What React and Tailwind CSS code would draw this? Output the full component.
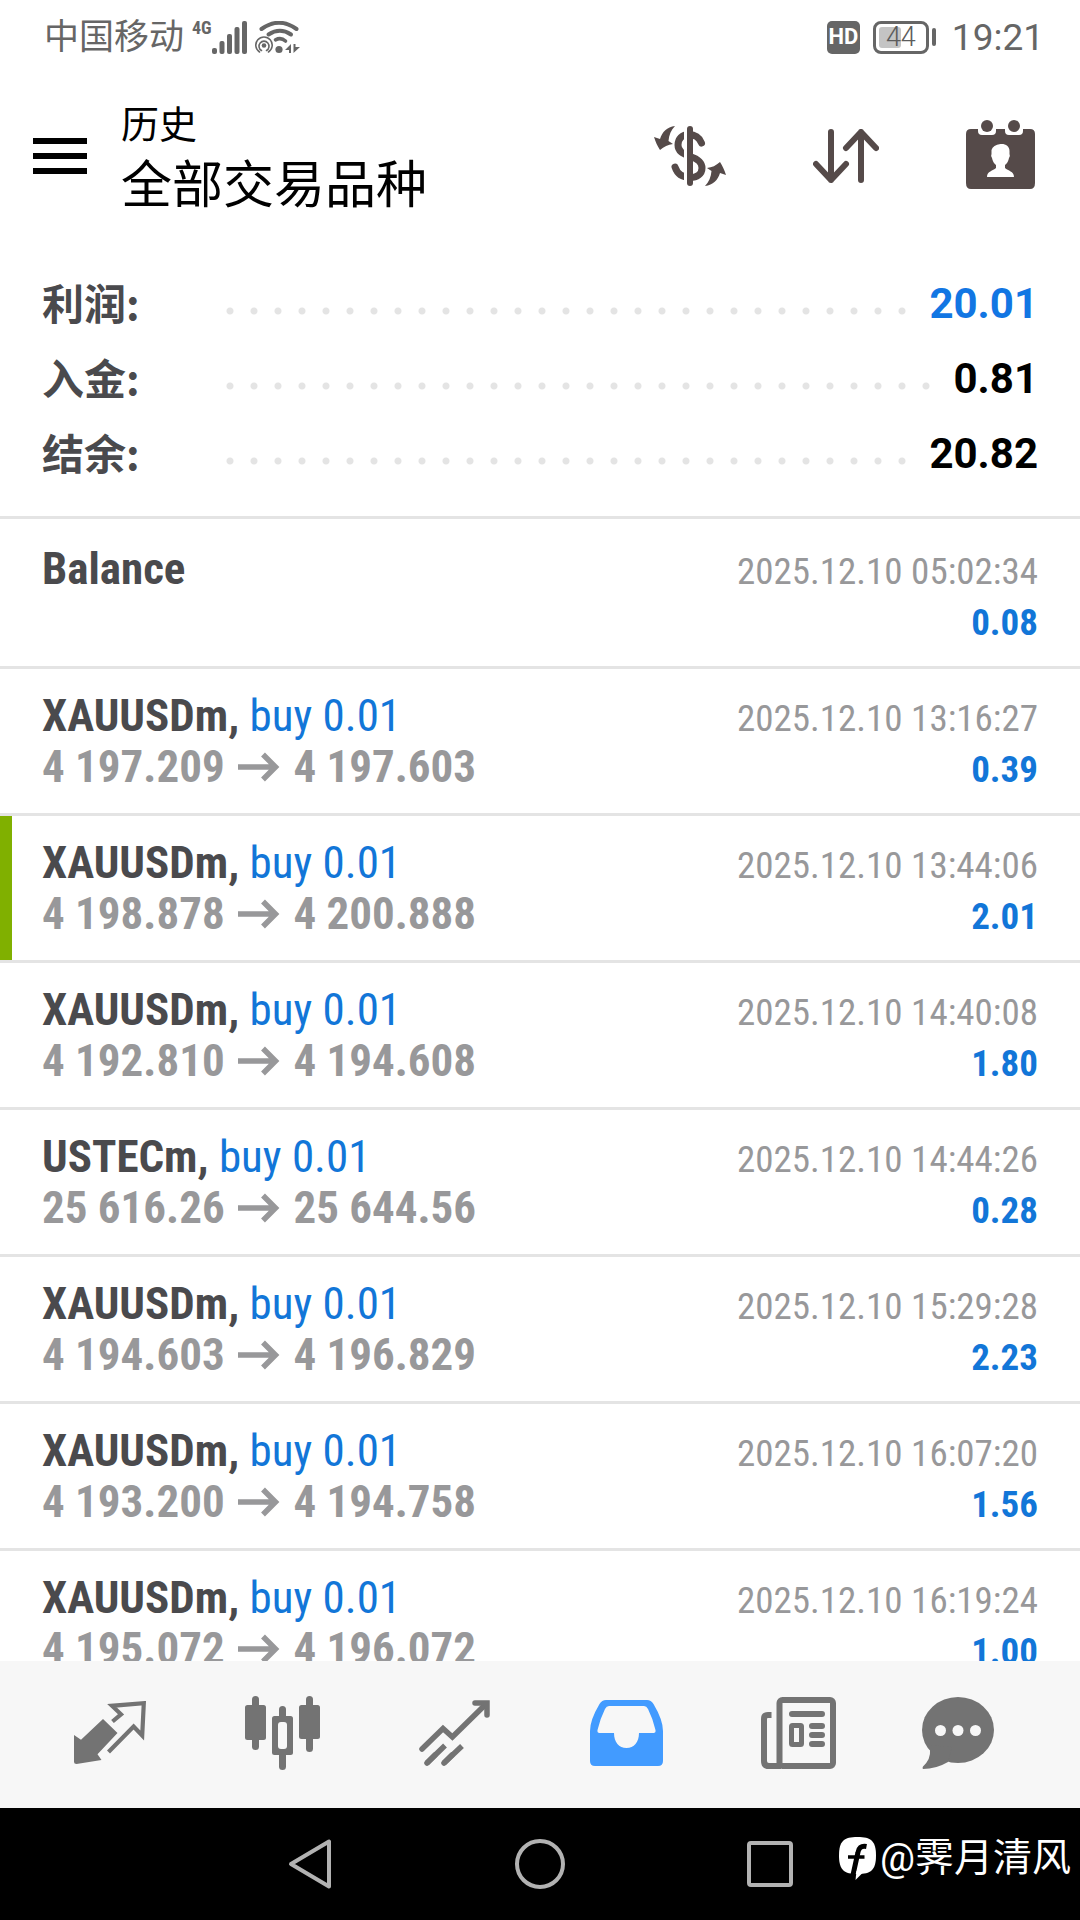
const CJK = 'font-["Roboto","Noto_Sans_CJK_SC",sans-serif]';
const CONDENSED = 'font-["Roboto_Condensed","Liberation_Sans_Narrow","Roboto",sans-serif]';

const totals = [
  { label: "利润:", value: "20.01", color: "text-[#1276e3]" },
  { label: "入金:", value: "0.81", color: "text-black" },
  { label: "结余:", value: "20.82", color: "text-black" },
];

const deals = [
  { symbol: "XAUUSDm", open: "4 197.209", close: "4 197.603", time: "2025.12.10 13:16:27", profit: "0.39" },
  { symbol: "XAUUSDm", open: "4 198.878", close: "4 200.888", time: "2025.12.10 13:44:06", profit: "2.01", marked: true },
  { symbol: "XAUUSDm", open: "4 192.810", close: "4 194.608", time: "2025.12.10 14:40:08", profit: "1.80" },
  { symbol: "USTECm", open: "25 616.26", close: "25 644.56", time: "2025.12.10 14:44:26", profit: "0.28" },
  { symbol: "XAUUSDm", open: "4 194.603", close: "4 196.829", time: "2025.12.10 15:29:28", profit: "2.23" },
  { symbol: "XAUUSDm", open: "4 193.200", close: "4 194.758", time: "2025.12.10 16:07:20", profit: "1.56" },
  { symbol: "XAUUSDm", open: "4 195.072", close: "4 196.072", time: "2025.12.10 16:19:24", profit: "1.00" },
];

function SignalIcon() {
  return (
    <svg width="35" height="33" viewBox="0 0 35 33" fill="currentColor" aria-hidden="true">
      <rect x="0" y="27" width="5" height="6" rx="2" />
      <rect x="7.5" y="20" width="5" height="13" rx="2" />
      <rect x="15" y="13" width="5" height="20" rx="2" />
      <rect x="22.5" y="6" width="5" height="27" rx="2" />
      <rect x="30" y="0" width="5" height="33" rx="2" />
    </svg>
  );
}

function WifiIcon() {
  return (
    <svg width="45" height="33" viewBox="0 0 45 33" fill="none" stroke="currentColor" strokeLinecap="round" aria-hidden="true">
      <path d="M6.5 8 Q24 -4.5 41.5 8" strokeWidth="4" />
      <path d="M13.5 13.5 Q25 6 36 13.5" strokeWidth="4" />
      <path d="M20.5 18.8 Q26 16 30.5 20" strokeWidth="3.6" />
      <circle cx="24" cy="28.500" r="3.6" fill="currentColor" stroke="none" />
      <circle cx="9" cy="24.5" r="2.3" fill="currentColor" stroke="none" />
      <path d="M6.5 29.5 A5 5 0 1 1 11.5 29.5" strokeWidth="1.6" />
      <path d="M4.5 31 A8.2 8.2 0 1 1 13.5 31" strokeWidth="1.6" />
      <path d="M30 29 L36 23 V32 H34 V29 Z M38.5 23 H40.5 V26 H45 L38.5 32 Z" fill="currentColor" stroke="none" />
    </svg>
  );
}

function BatteryIcon() {
  return (
    <span className="flex items-center gap-[3px]">
      <span className="relative flex h-[33px] w-14 items-center justify-center rounded-lg border-[3px] border-[#666]">
        <span className="absolute left-[3px] top-[3px] h-[21px] w-[22px] rounded-[3px] bg-[#c4c4c4]" />
        <span className="relative text-[27px] font-light leading-none text-[#5c5c5c]">44</span>
      </span>
      <span className="h-[18px] w-1 rounded-[2px] bg-[#666]" />
    </span>
  );
}

function StatusBar() {
  return (
    <div className={`flex h-[74px] items-center justify-between pl-[44px] pr-9 text-[#666] ${CJK}`}>
      <div className="flex items-center">
        <span className="text-[35px] leading-none">中国移动</span>
        <span className={`ml-2 self-start text-lg font-bold leading-4 ${CONDENSED}`}>4G</span>
        <SignalIcon />
        <span className="ml-2"><WifiIcon /></span>
      </div>
      <div className="flex items-center">
        <span className="flex h-[33px] w-[33px] items-center justify-center rounded-[5px] bg-[#666] text-[22px] font-bold leading-none text-white">HD</span>
        <span className="ml-[13px]"><BatteryIcon /></span>
        <span className="ml-4 text-[37px] leading-none">19:21</span>
      </div>
    </div>
  );
}

function CurrencyIcon() {
  return (
    <svg width="72" height="60" viewBox="0 0 72 60" fill="none" aria-hidden="true">
      <path d="M47.5 17 C45 11 40 8.5 35 8.5 C28 8.5 24 13 24 19 C24 26 30 28 36 30.5 C44 33 48 36 48 42 C48 48 43 51.5 36 51.5 C28 51.5 23 47 21 41" stroke="currentColor" strokeWidth="7" strokeLinecap="round" />
      <path d="M31.5 2 V58" stroke="#fff" strokeWidth="3" />
      <path d="M36 3 V57" stroke="currentColor" strokeWidth="6" strokeLinecap="round" />
      <path d="M21 0 C13 1 8 6 6 13 L0 11 C1.5 16 3.500 20 6 24 C10 20.5 14 18.5 19 18 L14.5 15 C15 9 17 4 21 0 Z" fill="currentColor" />
      <path d="M21 0 C13 1 8 6 6 13 L0 11 C1.5 16 3.500 20 6 24 C10 20.5 14 18.5 19 18 L14.5 15 C15 9 17 4 21 0 Z" fill="currentColor" transform="rotate(180 36 30)" />
    </svg>
  );
}

function SortIcon() {
  return (
    <svg width="66" height="54" viewBox="0 0 66 54" fill="none" stroke="currentColor" strokeWidth="6" strokeLinecap="round" strokeLinejoin="round" aria-hidden="true">
      <path d="M18 3 V51 M3 35 L18 51 L33 35" />
      <path d="M48 51 V3 M33 19 L48 3 L63 19" />
    </svg>
  );
}

function CalendarIcon() {
  return (
    <svg width="69" height="69" viewBox="0 0 69 69" aria-hidden="true">
      <path fill="currentColor" d="M5 9 H12 V11 Q12 15 16 15 H26 Q30 15 30 11 V9 H39 V11 Q39 15 43 15 H53 Q57 15 57 11 V9 H64 Q69 9 69 14 V63 Q69 69 64 69 H5 Q0 69 0 63 V14 Q0 9 5 9 Z" />
      <circle cx="21" cy="6" r="6" fill="currentColor" />
      <circle cx="48" cy="6" r="6" fill="currentColor" />
      <path fill="#fff" d="M34.5 24 C39 23.5 43.5 25.5 43.5 31 V34 Q44.5 36 43 38 Q42 43 39 45 V48 C42 51 48 51 48 57 H21 C21 51 27 51 30 48 V45 Q27 43 26 38 Q24.5 36 25.5 34 V30 Q27 25 34.5 24 Z" />
    </svg>
  );
}

function Header() {
  return (
    <header className={`flex h-[164px] items-center justify-between pl-[33px] pr-[45px] ${CJK}`}>
      <div className="flex items-center gap-[34px]">
        <button type="button" aria-label="菜单" className="flex w-[54px] flex-col gap-[9px]">
          <span className="h-1.5 w-full bg-black" />
          <span className="h-1.5 w-full bg-black" />
          <span className="h-1.5 w-full bg-black" />
        </button>
        <h1 className="pt-2 text-black">
          <span className="block text-[38px] leading-[52px]">历史</span>
          <span className="block text-[51px] leading-[70px]">全部交易品种</span>
        </h1>
      </div>
      <div className="flex items-center gap-[87px] text-[#554a49]">
        <button type="button" aria-label="货币"><CurrencyIcon /></button>
        <button type="button" aria-label="排序"><SortIcon /></button>
        <button type="button" aria-label="日期" className="pb-1"><CalendarIcon /></button>
      </div>
    </header>
  );
}

function Summary() {
  return (
    <dl className={`border-b-[3px] border-[#e4e4e4] px-[42px] pb-[25px] pt-7 text-[42px] font-bold ${CJK}`}>
      {totals.map((row) => (
        <div key={row.label} className="flex h-[75px] items-center">
          <dt className='w-[176px] shrink-0 self-start font-["Noto_Sans_CJK_SC",sans-serif] leading-[71px] text-[#4a4a4d]'>{row.label}</dt>
          <span className="mr-2 mt-[15px] h-2 flex-1 bg-[radial-gradient(circle,#e4e4e4_3px,transparent_4px)] bg-[length:24px_8px] bg-repeat-x" />
          <dd className={`leading-[75px] ${row.color}`}>{row.value}</dd>
        </div>
      ))}
    </dl>
  );
}

function Line({ left, right }) {
  return (
    <div className="flex h-[51px] items-baseline justify-between">
      <div className="text-[45px] leading-[51px]">{left}</div>
      <div className="text-[37px] leading-[45px]">{right}</div>
    </div>
  );
}

function PriceArrow() {
  return (
    <svg className="mx-[3px] inline align-baseline" width="42" height="30" viewBox="0 0 42 30" fill="none" stroke="currentColor" strokeWidth="5.5" role="img" aria-label="→">
      <path d="M0 15 H38 M25 2.5 L37.5 15 L25 27.5" />
    </svg>
  );
}

function DealList() {
  return (
    <ul className={`min-h-0 flex-1 overflow-hidden ${CONDENSED}`}>
      <li className="border-b-[3px] border-[#e4e4e4] px-[42px] pb-[21px] pt-6">
        <Line
          left={<span className="font-bold text-[#4a4a4d]">Balance</span>}
          right={<time className="text-[#98989a]">2025.12.10 05:02:34</time>}
        />
        <Line left={<span>&nbsp;</span>} right={<span className="font-bold text-[#1276d8]">0.08</span>} />
      </li>
      {deals.map((deal) => (
        <li key={deal.time} className="relative border-b-[3px] border-[#e4e4e4] px-[42px] py-[21px]">
          {deal.marked && <span className="absolute inset-y-0 left-0 w-3 bg-[#80b000]" />}
          <Line
            left={
              <>
                <span className="font-bold text-[#4a4a4d]">{deal.symbol}, </span>
                <span className="text-[#1276d8]">buy 0.01</span>
              </>
            }
            right={<time className="text-[#98989a]">{deal.time}</time>}
          />
          <Line
            left={
              <span className="font-bold text-[#98989a]">
                {deal.open} <PriceArrow /> {deal.close}
              </span>
            }
            right={<span className="font-bold text-[#1276d8]">{deal.profit}</span>}
          />
        </li>
      ))}
    </ul>
  );
}

function QuotesIcon() {
  return (
    <svg width="72" height="63" viewBox="0 0 72 63" aria-hidden="true">
      <path fill="currentColor" d="M29 18 L43.5 32 L23.5 53.3 L27.5 59 L2.5 63 Q0 63 0 61 V34 L7 38.7 Z" />
      <path fill="none" stroke="currentColor" strokeWidth="4.2" d="M38.5 20.5 L47 13.3 L38 4.8 L69.8 2.2 L68.2 34.5 L59.6 25.5 L34.5 51" />
    </svg>
  );
}

function CandlesIcon() {
  return (
    <svg width="75" height="74" viewBox="0 0 75 74" fill="currentColor" aria-hidden="true">
      <rect x="7" y="0" width="7" height="54" rx="3.5" />
      <rect x="0" y="9" width="21" height="35" rx="2.5" />
      <rect x="61" y="0" width="7" height="56" rx="3.5" />
      <rect x="54" y="9" width="21" height="34" rx="2.5" />
      <rect x="34" y="10" width="7" height="64" rx="3.5" />
      <rect x="27" y="20" width="21" height="39" rx="2.5" />
      <rect x="33" y="26" width="9" height="27" rx="3" fill="#f7f7f7" />
    </svg>
  );
}

function TrendIcon() {
  return (
    <svg width="71" height="66" viewBox="0 0 71 66" fill="none" stroke="currentColor" strokeWidth="5.5" aria-hidden="true">
      <path strokeLinecap="round" d="M3 49 L24 28.5 L33.4 37 L67 4" />
      <path strokeLinecap="round" d="M56 3 H68 V15" />
      <path strokeLinecap="round" d="M8 63 L16 55 M25 63 L33 55" />
      <path d="M8 63 L26 45.5 M25 63 L43 46" />
    </svg>
  );
}

function InboxIcon() {
  return (
    <svg width="73" height="66" viewBox="0 0 73 66" fill="currentColor" fillRule="evenodd" aria-hidden="true">
      <path d="M16 0 H57 Q61 0 63.5 4 Q73 20 73 31 V61 Q73 66 68 66 H5 Q0 66 0 61 V31 Q0 20 9.5 4 Q12 0 16 0 Z M19 6 Q16.5 6 15 9 Q10 19 7.5 30 Q7 33 9.5 33 H24 C24 42 29 48 36.5 48 C44 48 49 42 49 33 H63.5 Q66 33 65.5 30 Q63 19 58 9 Q56.5 6 54 6 Z" />
    </svg>
  );
}

function NewsIcon() {
  return (
    <svg width="75" height="72" viewBox="0 0 75 72" fill="none" stroke="currentColor" strokeWidth="6" aria-hidden="true">
      <rect x="18.5" y="3" width="53.5" height="66" rx="3" />
      <path d="M10.5 18 H7 Q3 18 3 22 V64 Q3 69 8 69 H20" />
      <path strokeLinecap="round" d="M31 17 H61 M51 29 H61 M51 38 H61 M51 47 H61" />
      <rect x="30.5" y="28.5" width="10" height="19" rx="1" strokeWidth="5" />
    </svg>
  );
}

function ChatIcon() {
  return (
    <svg width="72" height="72" viewBox="0 0 72 72" fill="currentColor" aria-hidden="true">
      <ellipse cx="36" cy="33" rx="36" ry="33" />
      <path d="M8 53 Q9 62 1 69.5 Q0 71 1 72 Q14 72 26 65 L30 50 L6 48 Z" />
      <g fill="#f7f7f7">
        <circle cx="18.5" cy="33.5" r="5.5" />
        <circle cx="36" cy="33.5" r="5.5" />
        <circle cx="53.5" cy="33.5" r="5.5" />
      </g>
    </svg>
  );
}

function TabBar() {
  return (
    <nav className="grid h-[147px] shrink-0 grid-cols-6 bg-[#f7f7f7] px-6 pb-1 text-[#737373]">
      <button type="button" aria-label="行情" className="flex items-center justify-center"><QuotesIcon /></button>
      <button type="button" aria-label="图表" className="flex items-center justify-center"><CandlesIcon /></button>
      <button type="button" aria-label="交易" className="flex items-center justify-center"><TrendIcon /></button>
      <button type="button" aria-label="历史" className="flex items-center justify-center text-[#429bff]"><InboxIcon /></button>
      <button type="button" aria-label="新闻" className="flex items-center justify-center"><NewsIcon /></button>
      <button type="button" aria-label="消息" className="flex items-center justify-center pr-6"><ChatIcon /></button>
    </nav>
  );
}

function SystemBar() {
  return (
    <div className="relative flex h-28 shrink-0 items-center justify-center bg-black text-[#b2b2b2]">
      <button type="button" aria-label="返回" className="flex w-[230px] justify-center">
        <svg width="44" height="52" viewBox="0 0 44 52" fill="none" stroke="currentColor" strokeWidth="4" strokeLinejoin="round" aria-hidden="true">
          <path d="M41 3.5 V48.5 L3 26 Z" />
        </svg>
      </button>
      <button type="button" aria-label="主页" className="flex w-[230px] justify-center">
        <span className="h-[50px] w-[50px] rounded-full border-4 border-[#b2b2b2]" />
      </button>
      <button type="button" aria-label="最近任务" className="flex w-[230px] justify-center">
        <span className="h-[46px] w-[46px] rounded-[4px] border-4 border-[#b2b2b2]" />
      </button>
      <div className={`absolute right-[9px] top-[27px] flex items-center gap-1 text-white ${CJK}`}>
        <svg width="37" height="43" viewBox="0 0 37 43" aria-hidden="true">
          <path fill="#fff" d="M18.5 0 C32 0 37 4 37 18.500 C37 33 32 37 18.5 37 C5 37 0 33 0 18.500 C0 4 5 0 18.5 0 Z" />
          <path fill="none" stroke="#000" strokeWidth="5" d="M27.500 9.500 C22 8.500 19.500 11 18.800 16 L14 38" />
          <path fill="none" stroke="#000" strokeWidth="3.500" d="M9 20 H25.500" />
          <path fill="#fff" d="M17.500 34 L16.500 43 L24 35.500 Z" />
        </svg>
        <span className="text-[39px] leading-[46px]">@霁月清风</span>
      </div>
    </div>
  );
}

export default function App() {
  return (
    <main className="flex h-screen w-full flex-col overflow-hidden bg-white">
      <StatusBar />
      <Header />
      <Summary />
      <DealList />
      <TabBar />
      <SystemBar />
    </main>
  );
}
